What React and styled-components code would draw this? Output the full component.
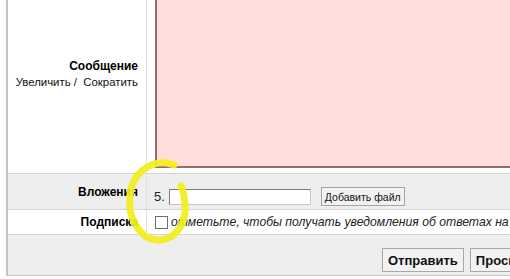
import styled, { createGlobalStyle } from "styled-components";

const Global = createGlobalStyle`
  html, body {
    margin: 0;
    padding: 0;
    background: #ffffff;
    overflow: hidden;
  }
  body {
    font-family: "Liberation Sans", Arial, sans-serif;
    color: #000;
  }
`;

const Page = styled.div`
  position: relative;
  width: 100vw;
  height: 100vh;
  overflow: hidden;
`;

const Form = styled.div`
  width: 640px;
  margin: -17px 0 0 6px;
  border-left: 2px solid #c4c4c4;
  border-bottom: 1px solid #c8c8c8;
`;

const Row = styled.div`
  display: grid;
  grid-template-columns: 139px 501px;
  background: ${(p) => (p.$gray ? "#eeeeee" : "#ffffff")};
  border-bottom: 1px solid #d4d4d4;
`;

const Label = styled.div`
  display: flex;
  flex-direction: column;
  justify-content: center;
  align-items: flex-end;
  padding: ${(p) => p.$pad || "0"};
  padding-right: 8px;
  border-right: 1px solid #e2e2e2;
  font-size: 12px;
  line-height: 16px;
`;

const Title = styled.b`
  font-weight: bold;
`;

const Links = styled.span`
  font-size: 11.4px;
  color: #111;
`;

const Cell = styled.div`
  display: flex;
  align-items: center;
  padding: ${(p) => p.$pad || "0 0 0 7px"};
`;

const Textarea = styled.div`
  flex: 1;
  height: 183px;
  background: #ffdedd;
  border-left: 2px solid #9b6a6a;
  border-bottom: 2px solid #9b6a6a;
`;

const Num = styled.span`
  font-size: 13px;
  color: #222;
  margin-right: 4px;
`;

const FileInput = styled.div`
  width: 140px;
  height: 14px;
  border: 1px solid #7f7f7f;
  border-right-color: #c8c8c8;
  border-bottom-color: #c8c8c8;
  background: #fff;
  margin-right: 10px;
`;

const SmallButton = styled.button`
  font-family: "Liberation Sans", Arial, sans-serif;
  font-size: 10.5px;
  height: 19px;
  padding: 0 3px;
  background: #f2f2f2;
  border: 1px solid #a4a4a4;
  color: #111;
`;

const Check = styled.span`
  flex: none;
  width: 11px;
  height: 11px;
  border: 1px solid #6e6e6e;
  background: #fff;
  margin-right: 3px;
`;

const Note = styled.span`
  font-size: 12.2px;
  font-style: italic;
  color: #222;
  white-space: nowrap;
`;

const Buttons = styled.div`
  display: flex;
  gap: 6px;
  padding: 13px 0 3px 374px;
  background: #eeeeee;
`;

const BigButton = styled.button`
  font-family: "Liberation Sans", Arial, sans-serif;
  font-size: 13px;
  font-weight: bold;
  height: 24px;
  padding: 0 5px;
  background: #f2f2f2;
  border: 1px solid #a8a8a8;
  color: #111;
`;

const Highlight = styled.svg`
  position: absolute;
  left: 120px;
  top: 155px;
  pointer-events: none;
`;

export default function App() {
  return (
    <Page>
      <Global />
      <Form>
        <Row>
          <Label $pad="0 0 8px 0">
            <Title>Сообщение</Title>
            <Links>Увеличить /&nbsp; Сократить</Links>
          </Label>
          <Cell $pad="0 0 5px 8px">
            <Textarea />
          </Cell>
        </Row>
        <Row $gray>
          <Label>
            <Title>Вложения</Title>
          </Label>
          <Cell $pad="13px 0 3px 7px">
            <Num>5.</Num>
            <FileInput />
            <SmallButton>Добавить файл</SmallButton>
          </Cell>
        </Row>
        <Row>
          <Label>
            <Title>Подписка</Title>
          </Label>
          <Cell $pad="5px 0 5px 8px">
            <Check />
            <Note>отметьте, чтобы получать уведомления об ответах на эту тему</Note>
          </Cell>
        </Row>
        <Buttons>
          <BigButton>Отправить</BigButton>
          <BigButton>Просмотр</BigButton>
        </Buttons>
      </Form>
      <Highlight width="80" height="95" viewBox="0 0 80 95">
        <path
          d="M54 10 C36 3 13 14 10 40 C7 65 22 87 41 85 C57 83 67 67 65 48 C64 40 63 35 61 31"
          fill="none"
          stroke="#f2ee1c"
          strokeWidth="7"
          strokeLinecap="round"
          opacity="0.92"
        />
      </Highlight>
    </Page>
  );
}
